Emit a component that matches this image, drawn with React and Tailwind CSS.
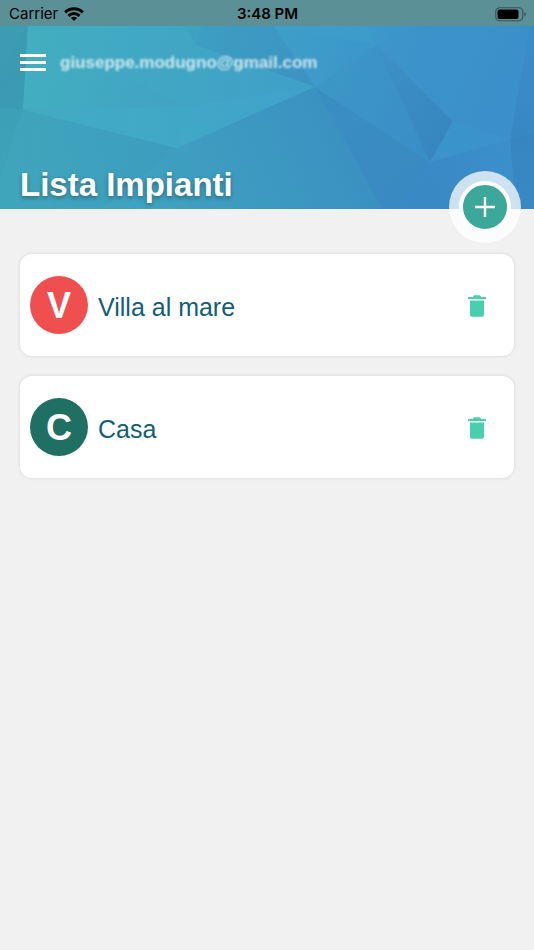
import { useState } from "react";

// points of each facet, then a shade that runs along the line x1,y1 -> x2,y2
const facets = [
  { points: "0,0 28,0 23,84 0,82", line: [0, 0, 28, 70], from: "#3c9ab1", to: "#3b9ab4" },
  { points: "0,0 26,0 0,55", line: [0, 0, 20, 30], from: "#3d9db2", to: "#3b9bb3" },
  { points: "0,82 23,84 0,155", line: [0, 82, 10, 155], from: "#3ca0b6", to: "#3ea4b9" },
  { points: "23,84 177,123 145,150 100,184 0,184 0,155", line: [20, 150, 177, 123], from: "#3fa5bb", to: "#3d9cc0" },
  { points: "28,0 184,81 23,84", line: [28, 40, 184, 81], from: "#42aec0", to: "#40a2c3" },
  { points: "28,0 186,0 196,19 315,61 184,81", line: [28, 0, 300, 60], from: "#42adc0", to: "#3fa0c8" },
  { points: "23,84 184,81 177,123", line: [23, 84, 184, 100], from: "#42abc0", to: "#41a7c8" },
  { points: "184,81 315,61 177,123", line: [177, 110, 315, 61], from: "#41a8c7", to: "#40a1cb" },
  { points: "186,0 274,0 315,61 196,19", line: [186, 0, 315, 50], from: "#3e9fc2", to: "#3b93c2" },
  { points: "186,0 202,0 196,19", line: [186, 0, 202, 19], from: "#3fa3c3", to: "#3e9ec1" },
  { points: "274,0 368,0 376,19 315,61", line: [280, 0, 370, 30], from: "#3f9fc8", to: "#3c96ca" },
  { points: "274,0 368,0 376,19", line: [274, 0, 376, 19], from: "#3f9fc8", to: "#3d9acb" },
  { points: "368,0 436,0 376,19", line: [368, 0, 436, 0], from: "#3d98ca", to: "#3b91cb" },
  { points: "145,150 177,123 315,61 382,184 100,184", line: [130, 184, 340, 90], from: "#40a3c0", to: "#3a91c1" },
  { points: "315,61 430,137 400,184 382,184", line: [335, 80, 420, 170], from: "#398ec1", to: "#3989c2" },
  { points: "315,61 376,19 430,137", line: [315, 61, 430, 110], from: "#3c97c5", to: "#3a8ec8" },
  { points: "376,19 453,96 430,137", line: [376, 50, 453, 96], from: "#3b90c5", to: "#3786c0" },
  { points: "376,19 436,0 530,0 510,114 453,96", line: [376, 19, 510, 80], from: "#3c95cb", to: "#3b8fca" },
  { points: "453,96 510,114 430,137", line: [430, 137, 500, 110], from: "#3b94cb", to: "#3b92cc" },
  { points: "430,137 510,114 516,184 400,184", line: [430, 150, 510, 114], from: "#3989c5", to: "#3b90cb" },
  { points: "530,0 534,0 534,107 510,114", line: [510, 114, 534, 20], from: "#3787c3", to: "#3a8cc8" },
  { points: "510,114 534,107 534,184 516,184", line: [510, 114, 534, 184], from: "#3785c0", to: "#3989c5" },
];

const HeaderBackground = () => (
  <svg
    className="absolute inset-0 h-full w-full"
    viewBox="0 0 534 184"
    preserveAspectRatio="none"
    aria-hidden="true"
  >
    <defs>
      <linearGradient id="base">
        <stop offset="0" stopColor="#40a6bc" />
        <stop offset="0.5" stopColor="#3e9bc5" />
        <stop offset="1" stopColor="#3a8cc9" />
      </linearGradient>
      {facets.map((f, i) => (
        <linearGradient
          key={i}
          id={`facet-${i}`}
          gradientUnits="userSpaceOnUse"
          x1={f.line[0]}
          y1={f.line[1]}
          x2={f.line[2]}
          y2={f.line[3]}
        >
          <stop offset="0" stopColor={f.from} />
          <stop offset="1" stopColor={f.to} />
        </linearGradient>
      ))}
    </defs>
    <rect width="534" height="184" fill="url(#base)" />
    {facets.map((f, i) => (
      <polygon key={i} points={f.points} fill={`url(#facet-${i})`} />
    ))}
  </svg>
);

const WifiIcon = () => (
  <svg className="h-[14px] w-5" viewBox="0 0 20 14" aria-hidden="true">
    <g fill="none" stroke="#000" strokeWidth="3">
      <path d="M1.2 5.300a12.700 12.700 0 0 1 17.600 0" />
      <path d="M4.500 8.800a7.900 7.900 0 0 1 11 0" />
    </g>
    <path d="M10 14 6.900 11a4.400 4.400 0 0 1 6.200 0z" />
  </svg>
);

const BatteryIcon = () => (
  <svg className="h-[15px] w-[31px]" viewBox="0 0 31 15" aria-hidden="true">
    <rect x="0.75" y="0.75" width="27" height="13" rx="4" fill="none" stroke="#355659" strokeWidth="1.2" />
    <rect x="2.500" y="2.500" width="21" height="9.500" rx="2" />
    <path d="M29.300 5v4.600c1-.4 1.500-1.300 1.500-2.300s-.5-1.900-1.500-2.300z" fill="#355659" />
  </svg>
);

const TrashIcon = () => (
  <svg className="h-[22px] w-[18px]" viewBox="0 0 18 22" fill="currentColor" aria-hidden="true">
    <path d="M0 2h4.800L6 .3h6L13.200 2H18v2H0z" />
    <path d="M2 5.500h14v14.300a2 2 0 0 1-2 2H4a2 2 0 0 1-2-2z" />
  </svg>
);

const StatusBar = () => (
  <div className="grid h-[26px] grid-cols-3 items-center bg-[#5a9096] pt-[2px] pr-2 pl-[9px] font-['Inter',sans-serif] text-[15px] text-black">
    <div className="flex items-center gap-[6px]">
      <span>Carrier</span>
      <WifiIcon />
    </div>
    <span className="text-center font-semibold">3:48 PM</span>
    <div className="flex justify-end">
      <BatteryIcon />
    </div>
  </div>
);

const PlantCard = ({ plant, onDelete }) => (
  <li className="flex h-[102px] items-center rounded-xl bg-white pr-7 pl-[10px] shadow-[0_0_3px_1px_rgba(0,0,0,0.07)]">
    <div
      className={`flex h-[58px] w-[58px] items-center justify-center rounded-full pt-[2px] text-4xl font-bold text-white ${plant.color}`}
    >
      {plant.name[0]}
    </div>
    <h2 className="ml-[10px] flex-1 pt-[6px] text-[25px] text-[#125e78]">{plant.name}</h2>
    <button
      aria-label={`Elimina ${plant.name}`}
      onClick={() => onDelete(plant.id)}
      className="pt-[2px] text-[#48cfae]"
    >
      <TrashIcon />
    </button>
  </li>
);

const App = () => {
  const [plants, setPlants] = useState([
    { id: 1, name: "Villa al mare", color: "bg-[#f04f50]" },
    { id: 2, name: "Casa", color: "bg-[#1f6f62]" },
  ]);

  const removePlant = (id) => {
    setPlants((prev) => prev.filter((p) => p.id !== id));
  };

  return (
    <div className="min-h-screen bg-[#f1f1f1] font-['Liberation_Sans',Arial,sans-serif]">
      <StatusBar />

      <header className="relative flex h-[183px] flex-col justify-between px-5 pt-6">
        <HeaderBackground />
        <div className="relative flex items-center gap-[14px]">
          <button aria-label="Menu" className="flex w-[26px] flex-col gap-1">
            <span className="h-[3px] bg-white" />
            <span className="h-[3px] bg-white" />
            <span className="h-[3px] bg-white" />
          </button>
          <span className="text-[17px] font-bold text-white/75 blur-[1px]">
            giuseppe.modugno@gmail.com
          </span>
        </div>
        <h1 className="relative text-[33px] font-bold text-white [text-shadow:0_2px_4px_rgba(0,0,0,0.35)]">
          Lista Impianti
        </h1>
        <button
          aria-label="Aggiungi impianto"
          className="absolute right-[13px] -bottom-[34px] flex h-[72px] w-[72px] items-center justify-center rounded-full bg-white/75"
        >
          <span className="flex h-[52px] w-[52px] items-center justify-center rounded-full border-4 border-white bg-[#3ca899]">
            <svg className="h-5 w-5" viewBox="0 0 20 20" stroke="#fff" strokeWidth="2.4" aria-hidden="true">
              <path d="M10 0v20M0 10h20" />
            </svg>
          </span>
        </button>
      </header>

      <main className="px-5 pt-[45px]">
        <ul className="flex flex-col gap-5">
          {plants.map((plant) => (
            <PlantCard key={plant.id} plant={plant} onDelete={removePlant} />
          ))}
        </ul>
      </main>
    </div>
  );
};

export default App;
